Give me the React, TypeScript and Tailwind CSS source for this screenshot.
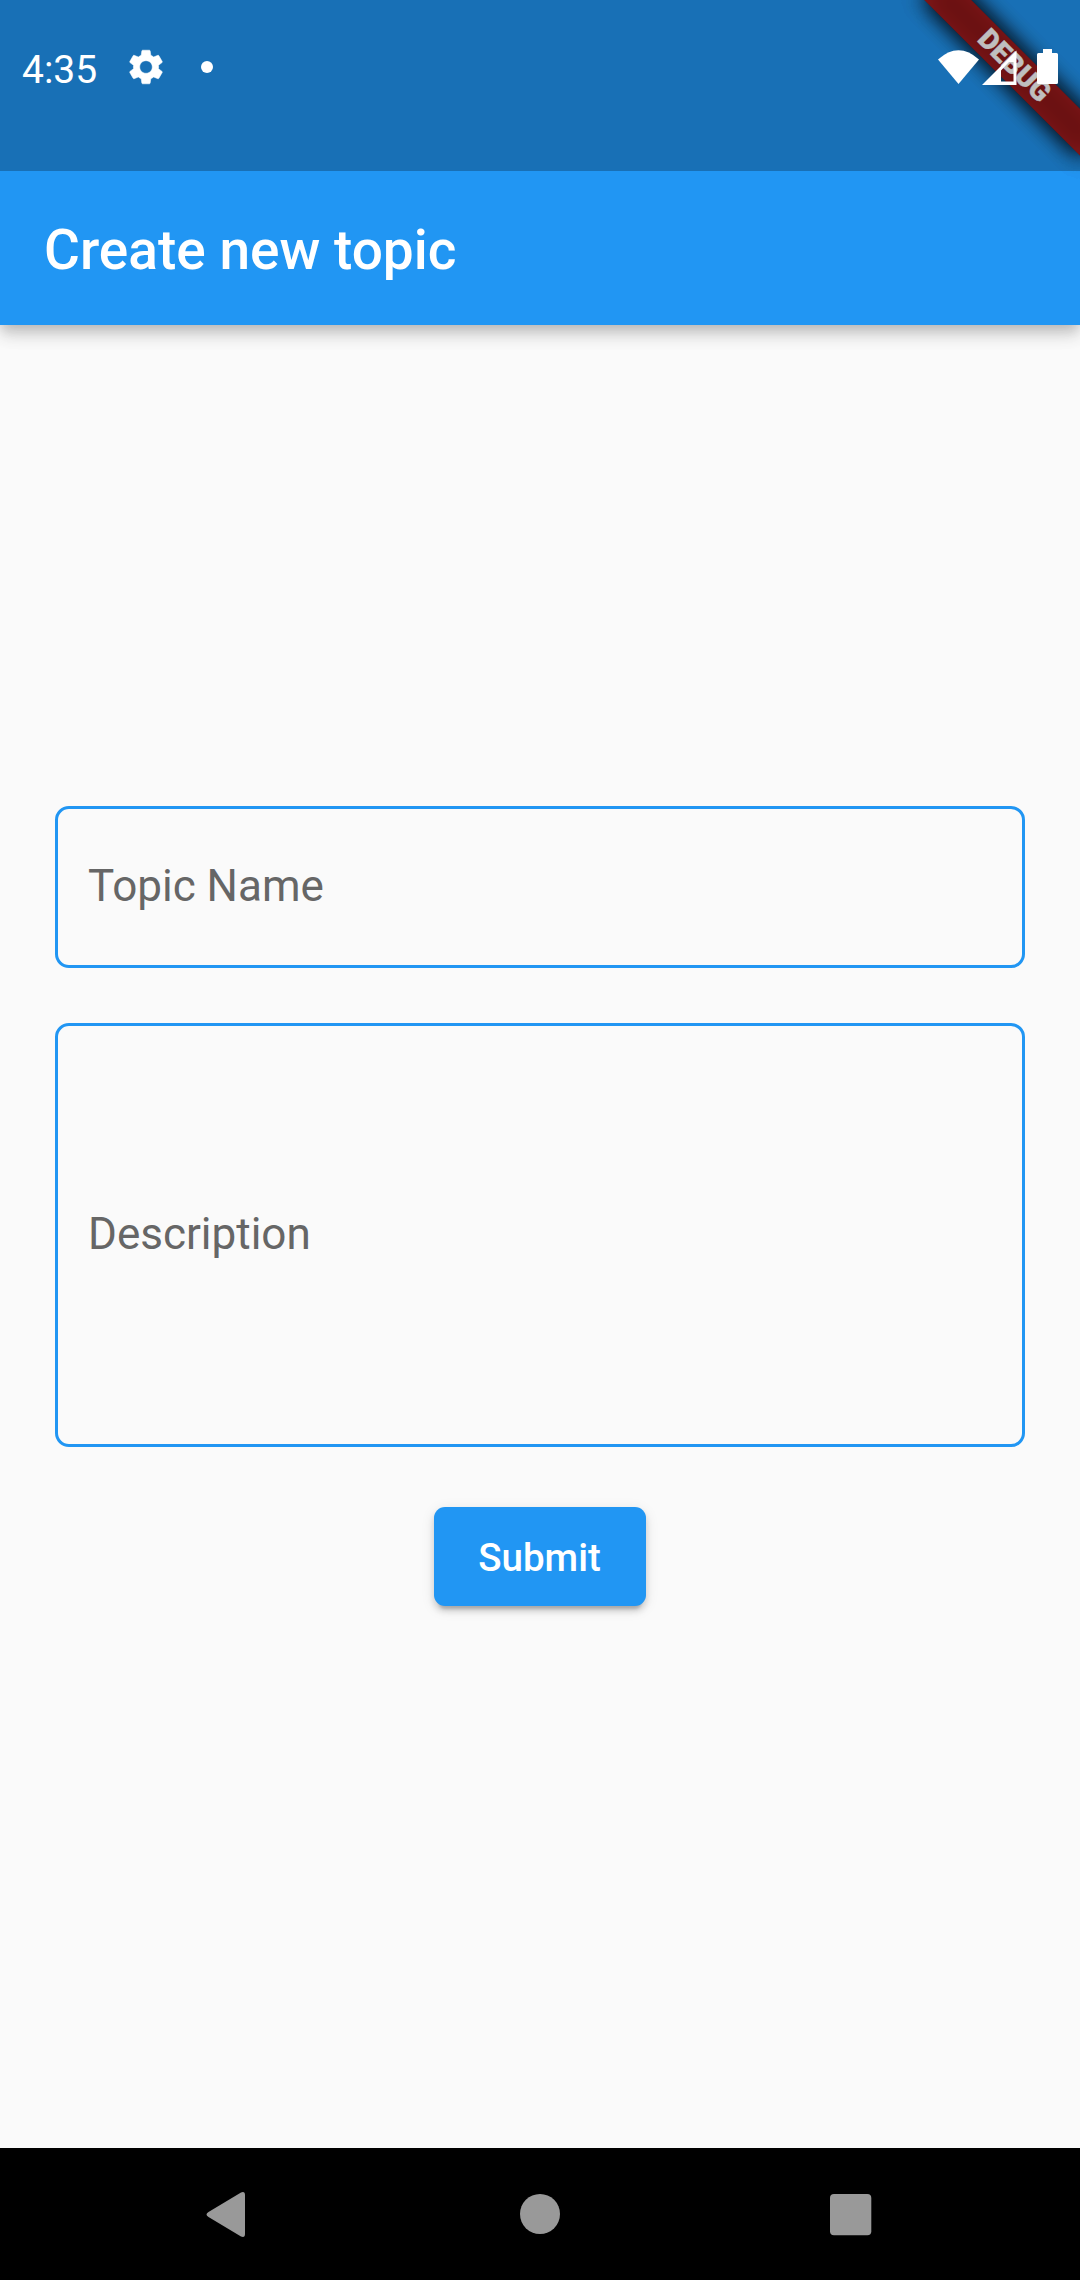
import React from "react";

function GearIcon() {
  return (
    <svg className="-ml-[1px] h-[42px] w-[42px]" viewBox="0 0 24 24" fill="white" stroke="white" strokeWidth="0.3">
      <path d="M19.14 12.94c.04-.3.06-.61.06-.94 0-.32-.02-.64-.07-.94l2.03-1.58c.18-.14.23-.41.12-.61l-1.92-3.32c-.12-.22-.37-.29-.59-.22l-2.39.96c-.5-.38-1.03-.7-1.62-.94L14.4 2.81c-.04-.24-.24-.41-.48-.41h-3.84c-.24 0-.43.17-.47.41L9.25 5.35c-.59.24-1.13.57-1.62.94l-2.39-.96c-.22-.08-.47 0-.59.22L2.74 8.87c-.12.21-.08.47.12.61l2.03 1.58c-.05.3-.09.63-.09.94s.02.64.07.94l-2.03 1.58c-.18.14-.23.41-.12.61l1.92 3.32c.12.22.37.29.59.22l2.39-.96c.5.38 1.03.7 1.62.94l.36 2.54c.05.24.24.41.48.41h3.84c.24 0 .44-.17.47-.41l.36-2.54c.59-.24 1.13-.56 1.62-.94l2.39.96c.22.08.47 0 .59-.22l1.92-3.32c.12-.22.07-.47-.12-.61l-2.01-1.58zM12 15.6c-1.98 0-3.6-1.62-3.6-3.6s1.62-3.6 3.6-3.6 3.6 1.62 3.6 3.6-1.62 3.6-3.6 3.6z" />
    </svg>
  );
}

// Each translucent layer darkens the ribbon and its shadow; the last carries the label.
function RibbonLayer({ label }: { label?: string }) {
  return (
    <div className="absolute top-[77px] left-[150px] h-[33px] w-[220px] origin-[110px_-77px] rotate-45">
      <div className="absolute inset-0 bg-black/50 blur-[11px]" />
      <div className="relative flex h-full items-center justify-center bg-[#b71c1c]/63 pb-[2px] text-[28px] leading-none font-black text-white [-webkit-text-stroke:0.4px_white]">
        {label}
      </div>
    </div>
  );
}

function DebugBanner() {
  return (
    <div className="pointer-events-none absolute top-0 right-0 h-[220px] w-[260px] overflow-hidden">
      <RibbonLayer />
      <RibbonLayer />
      <RibbonLayer label="DEBUG" />
    </div>
  );
}

export default function App() {
  return (
    <div className="relative flex h-[2280px] w-[1080px] flex-col overflow-hidden bg-[#fafafa] font-['Roboto',sans-serif]">
      <header className="relative z-10 bg-[#2196f3] shadow-[0_6px_11px_-3px_rgba(0,0,0,0.14),0_11px_14px_0_rgba(0,0,0,0.12),0_3px_27px_0_rgba(0,0,0,0.07)]">
        <DebugBanner />
        <div className="relative flex h-[171px] items-start justify-between bg-black/25 px-[22px]">
          <div className="flex h-[134px] items-center text-[39px] text-white">
            <span className="w-[104px] pt-[7px]">4:35</span>
            <GearIcon />
            <span className="ml-[34px] h-3 w-3 rounded-full bg-white" />
          </div>
          <div className="flex pt-[49px]">
            <svg className="h-9 w-[121px]" viewBox="0 0 121 36" fill="white">
              <path d="M21.500 35 1 10.500Q21.500-8 42 10.500Z" />
              <path fillRule="evenodd" d="M45 36 79.500 1.500V36ZM64 21.500V32.500H76.500V13H72Z" />
              <path d="M106 0H115V4H119.500Q121 4 121 5.500V33.500Q121 35 119.500 35H101.500Q100 35 100 33.500V5.500Q100 4 101.500 4H106Z" />
            </svg>
          </div>
        </div>
        <div className="flex h-[154px] items-center px-11 pt-[3px]">
          <h1 className="text-[55px] leading-[64px] font-medium text-white">Create new topic</h1>
        </div>
      </header>

      <main className="flex flex-1 flex-col items-center px-[55px] pt-[481px]">
        <input
          placeholder="Topic Name"
          className="h-[162px] w-full rounded-[14px] border-3 border-[#2196f3] bg-transparent px-[30px] pb-[2px] text-[44px] placeholder:text-[#666666] placeholder:opacity-100"
        />
        <input
          placeholder="Description"
          className="mt-[55px] h-[424px] w-full rounded-[14px] border-3 border-[#2196f3] bg-transparent px-[30px] pb-[2px] text-[44px] placeholder:text-[#666666] placeholder:opacity-100"
        />
        <button className="mt-[60px] h-[99px] w-[212px] rounded-[11px] bg-[#2196f3] pt-[2px] pr-[1px] text-[38.5px] font-medium text-white shadow-[0_8px_3px_-5px_rgba(0,0,0,0.16),0_5px_6px_0_rgba(0,0,0,0.14),0_3px_14px_0_rgba(0,0,0,0.1)]">
          Submit
        </button>
      </main>

      <nav className="h-[132px] bg-black">
        <svg className="block" width="1080" height="132" fill="#999999">
          <path d="M208.500 64 241 44.500Q245 43 245 47V86Q245 90 241 88.500L208.500 69Q204.500 66.500 208.500 64Z" />
          <circle cx="540" cy="66" r="20" />
          <rect x="830" y="46" width="41.300" height="41.300" rx="4" />
        </svg>
      </nav>
    </div>
  );
}
